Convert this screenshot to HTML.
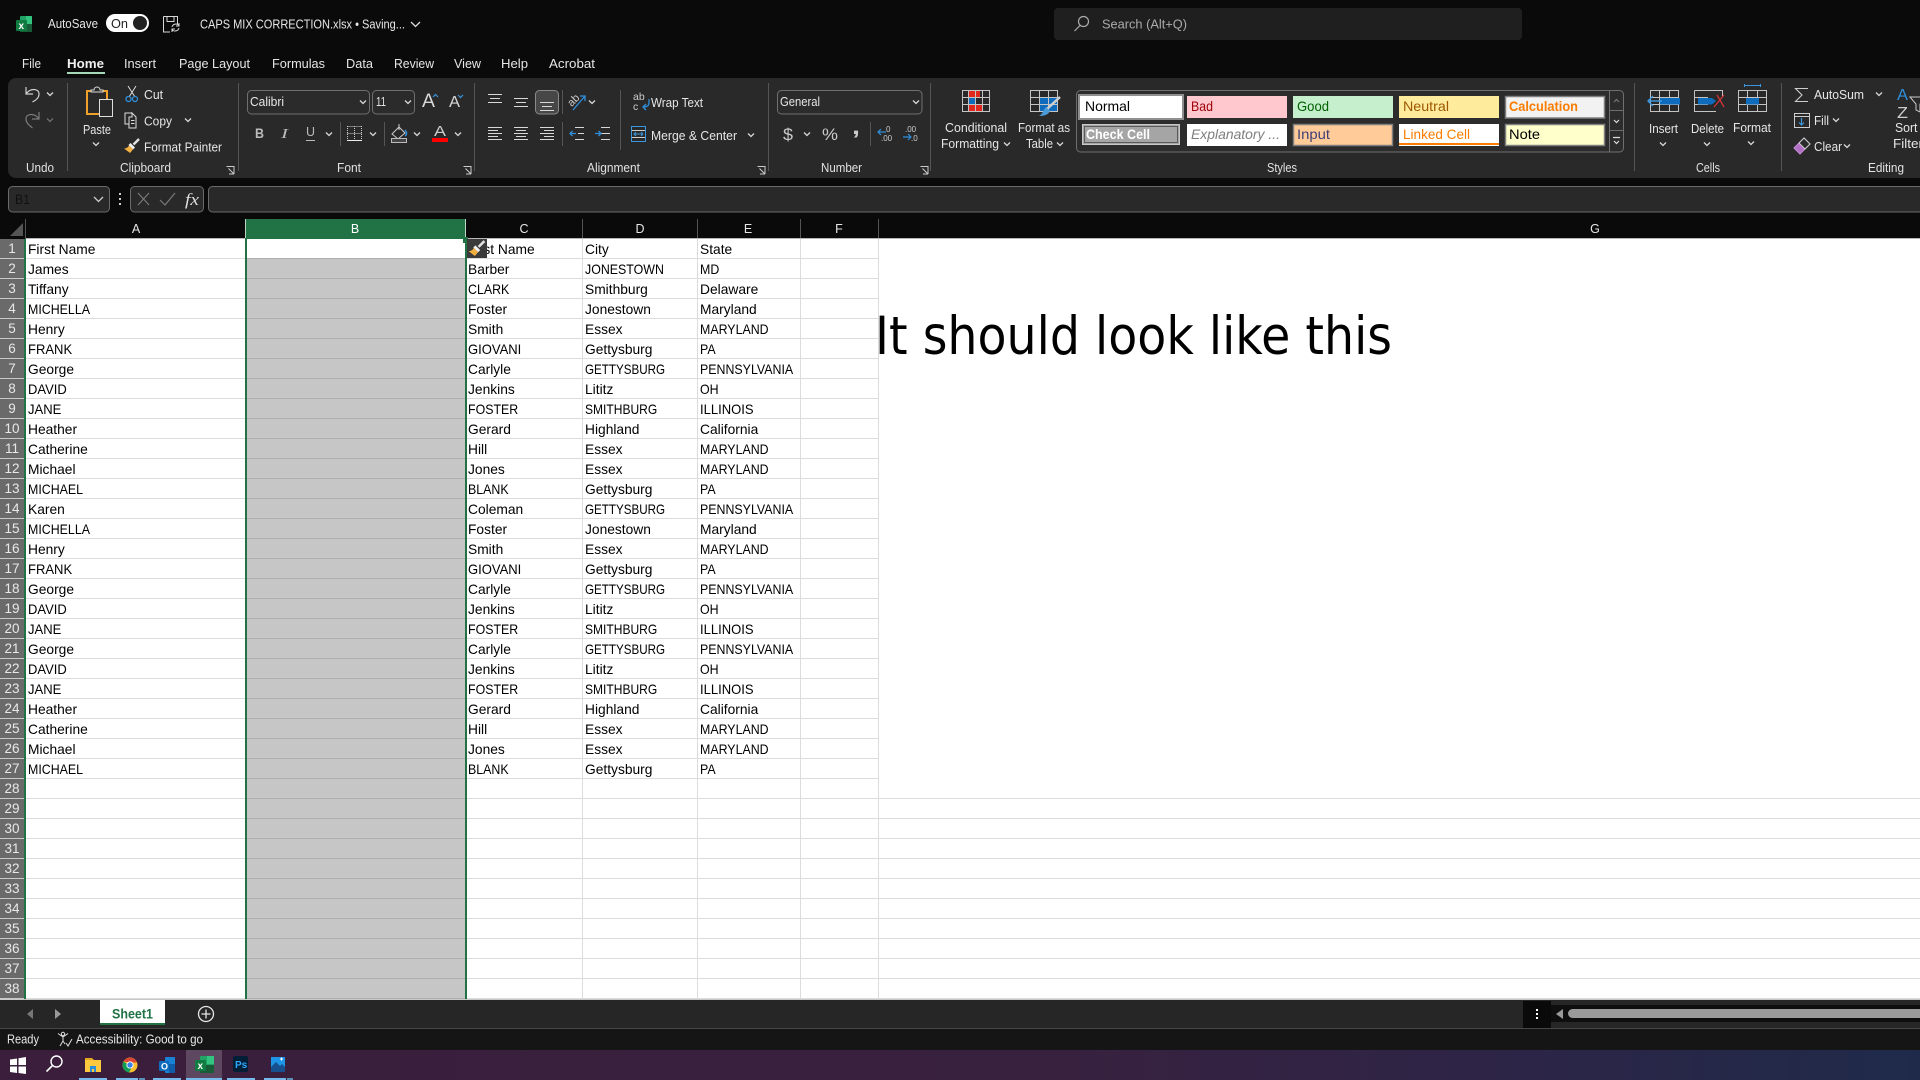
<!DOCTYPE html>
<html lang="en"><head><meta charset="utf-8"><title>CAPS MIX CORRECTION.xlsx - Excel</title>
<style>
html,body{margin:0;padding:0;background:#0a0a0a;width:1920px;height:1080px;overflow:hidden}
#w{position:relative;width:1920px;height:1080px;overflow:hidden;font-family:"Liberation Sans",sans-serif}
.a{position:absolute}
.col{position:absolute;top:239px;font-size:14px;color:#000;white-space:nowrap}
.col div{height:20px;line-height:20px;transform:scaleX(.985);transform-origin:0 50%}
.col div.u{transform:scaleX(.885)}
.col div.v{transform:scaleX(.93)}
.col div.w{transform:scaleX(.83)}
.col div.x{transform:scaleX(.86)}
.rh{position:absolute;left:0;top:239px;width:24px;text-align:center;font-size:13.5px;color:#e8e8e8}
.rh div{height:20px;line-height:20px}
svg{position:absolute;left:0;top:0}
text{font-family:"Liberation Sans",sans-serif;font-size:13px;fill:#e6e6e6}
.g{font-size:12.5px;fill:#e2e2e2}
.st{font-size:14px}
.ln{fill:none;stroke:#d8d8d8;stroke-width:1}
.dim{fill:none;stroke:#cfcfcf;stroke-width:1.2}
.box{fill:#2b2b2b;stroke:#6f6f6f;stroke-width:1}
.sep{stroke:#555;stroke-width:1}
</style></head><body>
<div id="w">
<!-- sheet background -->
<div class="a" style="left:26px;top:239px;width:1894px;height:761px;background:#fff"></div>
<div class="a" style="left:26px;top:239px;width:219px;height:760px;background:repeating-linear-gradient(to bottom,transparent 0 19px,#dcdcdc 19px 20px)"></div>
<div class="a" style="left:247px;top:258px;width:218px;height:741px;background:repeating-linear-gradient(to bottom,#afafaf 0 1px,#c6c6c6 1px 20px)"></div>
<div class="a" style="left:467px;top:239px;width:411px;height:760px;background:repeating-linear-gradient(to bottom,transparent 0 19px,#dcdcdc 19px 20px)"></div>
<div class="a" style="left:878px;top:779px;width:1042px;height:220px;background:repeating-linear-gradient(to bottom,transparent 0 19px,#dcdcdc 19px 20px)"></div>
<div class="a" style="left:582px;top:239px;width:1px;height:760px;background:#dcdcdc"></div>
<div class="a" style="left:697px;top:239px;width:1px;height:760px;background:#dcdcdc"></div>
<div class="a" style="left:800px;top:239px;width:1px;height:760px;background:#dcdcdc"></div>
<div class="a" style="left:878px;top:239px;width:1px;height:760px;background:#dcdcdc"></div>
<div class="a" style="left:24px;top:239px;width:2px;height:760px;background:#217346"></div>
<div class="a" style="left:245px;top:239px;width:2px;height:761px;background:#217346"></div>
<div class="a" style="left:465px;top:239px;width:2px;height:761px;background:#217346"></div>
<div class="a" style="left:0;top:239px;width:24px;height:760px;background:repeating-linear-gradient(to bottom,#6a6a6a 0 19px,#c9c9c9 19px 20px)"></div>
<div class="rh"><div>1</div><div>2</div><div>3</div><div>4</div><div>5</div><div>6</div><div>7</div><div>8</div><div>9</div><div>10</div><div>11</div><div>12</div><div>13</div><div>14</div><div>15</div><div>16</div><div>17</div><div>18</div><div>19</div><div>20</div><div>21</div><div>22</div><div>23</div><div>24</div><div>25</div><div>26</div><div>27</div><div>28</div><div>29</div><div>30</div><div>31</div><div>32</div><div>33</div><div>34</div><div>35</div><div>36</div><div>37</div><div>38</div></div>

<div class="col" style="left:28px"><div>First Name</div><div>James</div><div>Tiffany</div><div class="u">MICHELLA</div><div>Henry</div><div class="v">FRANK</div><div>George</div><div class="v">DAVID</div><div class="v">JANE</div><div>Heather</div><div>Catherine</div><div>Michael</div><div class="u">MICHAEL</div><div>Karen</div><div class="u">MICHELLA</div><div>Henry</div><div class="v">FRANK</div><div>George</div><div class="v">DAVID</div><div class="v">JANE</div><div>George</div><div class="v">DAVID</div><div class="v">JANE</div><div>Heather</div><div>Catherine</div><div>Michael</div><div class="u">MICHAEL</div></div>
<div class="col" style="left:468px"><div>Last Name</div><div>Barber</div><div class="u">CLARK</div><div>Foster</div><div>Smith</div><div class="v">GIOVANI</div><div>Carlyle</div><div>Jenkins</div><div class="u">FOSTER</div><div>Gerard</div><div>Hill</div><div>Jones</div><div class="u">BLANK</div><div>Coleman</div><div>Foster</div><div>Smith</div><div class="v">GIOVANI</div><div>Carlyle</div><div>Jenkins</div><div class="u">FOSTER</div><div>Carlyle</div><div>Jenkins</div><div class="u">FOSTER</div><div>Gerard</div><div>Hill</div><div>Jones</div><div class="u">BLANK</div></div>
<div class="col" style="left:585px"><div>City</div><div class="u">JONESTOWN</div><div>Smithburg</div><div>Jonestown</div><div>Essex</div><div>Gettysburg</div><div class="w">GETTYSBURG</div><div>Lititz</div><div class="x">SMITHBURG</div><div>Highland</div><div>Essex</div><div>Essex</div><div>Gettysburg</div><div class="w">GETTYSBURG</div><div>Jonestown</div><div>Essex</div><div>Gettysburg</div><div class="w">GETTYSBURG</div><div>Lititz</div><div class="x">SMITHBURG</div><div class="w">GETTYSBURG</div><div>Lititz</div><div class="x">SMITHBURG</div><div>Highland</div><div>Essex</div><div>Essex</div><div>Gettysburg</div></div>
<div class="col" style="left:700px"><div>State</div><div class="u">MD</div><div>Delaware</div><div>Maryland</div><div class="u">MARYLAND</div><div class="u">PA</div><div class="u">PENNSYLVANIA</div><div class="u">OH</div><div class="v">ILLINOIS</div><div>California</div><div class="u">MARYLAND</div><div class="u">MARYLAND</div><div class="u">PA</div><div class="u">PENNSYLVANIA</div><div>Maryland</div><div class="u">MARYLAND</div><div class="u">PA</div><div class="u">PENNSYLVANIA</div><div class="u">OH</div><div class="v">ILLINOIS</div><div class="u">PENNSYLVANIA</div><div class="u">OH</div><div class="v">ILLINOIS</div><div>California</div><div class="u">MARYLAND</div><div class="u">MARYLAND</div><div class="u">PA</div></div>

<svg width="1920" height="1080" viewBox="0 0 1920 1080">
<defs>
<path id="ch" d="M-3 -1.5L0 1.5L3 -1.5" fill="none" stroke="#d8d8d8" stroke-width="1.3"/>
<symbol id="br" viewBox="0 0 16 16" overflow="visible"><path d="M15 1L9.500 6.500" stroke="#e2e2e2" stroke-width="2.400" fill="none"/><path d="M6.500 5L11 9.500L9 11.500L4.500 7Z" fill="#f0f0f0"/><path d="M5 7.500L9 11.500L6 15L0 10.500C2 10.500 4 9.500 5 7.500Z" fill="#f2b040"/></symbol>
<linearGradient id="tb" x1="0" x2="1"><stop offset="0" stop-color="#3a1e3b"/><stop offset=".55" stop-color="#38213f"/><stop offset=".75" stop-color="#2f2446"/><stop offset="1" stop-color="#1f2a4a"/></linearGradient>
</defs>

<!-- Title bar -->
<rect x="20" y="16" width="12" height="16" rx="1" fill="#21a366"/><rect x="26" y="16" width="6" height="8" fill="#33c481"/><rect x="20" y="24" width="12" height="8" fill="#185c37"/><rect x="16" y="20" width="11" height="11" rx="1" fill="#107c41"/>
<text x="18.500" y="29" style="font-size:10px;font-weight:bold;fill:#fff">x</text>
<text x="48" y="28" textLength="50" lengthAdjust="spacingAndGlyphs">AutoSave</text>
<rect x="106" y="14" width="43" height="18" rx="9" fill="#fff"/>
<text x="111" y="28" textLength="17" lengthAdjust="spacingAndGlyphs" style="fill:#222">On</text>
<circle cx="140" cy="23" r="7" fill="#222"/>
<path d="M163.500 16.500H177.500V24M163.500 16.500V32H170M167 16.500V21.500H174V16.500" fill="none" stroke="#d8d8d8"/><path d="M172 27a4 4 0 0 1 7-1.500M179 28a4 4 0 0 1-7 1.500M179 23v3h-3M172 32v-3h3" fill="none" stroke="#d8d8d8"/>
<text x="200" y="28.500" textLength="205" lengthAdjust="spacingAndGlyphs">CAPS MIX CORRECTION.xlsx • Saving...</text>
<path d="M411 22L415.500 26.500L420 22" fill="none" stroke="#ddd" stroke-width="1.300"/>
<rect x="1054" y="8" width="468" height="32" rx="4" fill="#1f1f1f"/>
<circle cx="1083.500" cy="21.500" r="5" fill="none" stroke="#aaa" stroke-width="1.200"/><path d="M1080 25.500L1074.500 31" stroke="#aaa" stroke-width="1.200"/>
<text x="1102" y="28.500" textLength="85" lengthAdjust="spacingAndGlyphs" style="fill:#ababab">Search (Alt+Q)</text>

<!-- Tabs -->
<text x="22" y="68" textLength="19" lengthAdjust="spacingAndGlyphs">File</text>
<text x="67" y="68" textLength="37" lengthAdjust="spacingAndGlyphs" style="font-weight:bold;fill:#f0f0f0">Home</text>
<rect x="67" y="72" width="38" height="2" fill="#a6d8ba"/>
<text x="124" y="68" textLength="32" lengthAdjust="spacingAndGlyphs">Insert</text>
<text x="179" y="68" textLength="71" lengthAdjust="spacingAndGlyphs">Page Layout</text>
<text x="272" y="68" textLength="53" lengthAdjust="spacingAndGlyphs">Formulas</text>
<text x="346" y="68" textLength="27" lengthAdjust="spacingAndGlyphs">Data</text>
<text x="394" y="68" textLength="40" lengthAdjust="spacingAndGlyphs">Review</text>
<text x="454" y="68" textLength="27" lengthAdjust="spacingAndGlyphs">View</text>
<text x="501" y="68" textLength="27" lengthAdjust="spacingAndGlyphs">Help</text>
<text x="549" y="68" textLength="46" lengthAdjust="spacingAndGlyphs">Acrobat</text>

<!-- Ribbon -->
<rect x="8" y="78" width="1930" height="100" rx="8" fill="#292929"/>
<!-- undo -->
<path d="M26 87V94H33M26 94C30 88 39 88 39 94C39 98 36 100 32.500 102" class="dim"/><use href="#ch" x="50" y="94"/>
<path d="M39 112V119H32M39 119C35 113 26 113 26 119C26 123 29 125 32.500 128" fill="none" stroke="#7a7a7a" stroke-width="1.200"/><use href="#ch" x="50" y="120" opacity=".4"/>
<text x="26" y="172" textLength="28" lengthAdjust="spacingAndGlyphs" class="g">Undo</text>
<path d="M67.500 83V171" class="sep"/>
<!-- clipboard -->
<path d="M91 91H87V114H99M103 91H107V99" fill="none" stroke="#eea02c" stroke-width="2"/>
<path d="M91 92V90H94C94 86 100 86 100 90H103V92Z" fill="#292929" stroke="#ddd"/>
<rect x="99.500" y="99.500" width="13" height="17" fill="#292929" stroke="#ddd"/>
<text x="83" y="134" textLength="28" lengthAdjust="spacingAndGlyphs">Paste</text><use href="#ch" x="96" y="144"/>
<path d="M128 86L135 97M136 86L129 97" stroke="#ddd" fill="none"/><circle cx="128.500" cy="99" r="2.500" fill="none" stroke="#2f8fdc" stroke-width="1.300"/><circle cx="135" cy="99" r="2.500" fill="none" stroke="#2f8fdc" stroke-width="1.300"/>
<text x="144" y="99" textLength="19" lengthAdjust="spacingAndGlyphs">Cut</text>
<path d="M132 113H125V124H129M132 113L136 117V128H129V117H132Z" fill="none" stroke="#ddd"/><path d="M131 120.500H134.500M131 123.500H134.500" stroke="#ddd"/>
<text x="144" y="125.500" textLength="28" lengthAdjust="spacingAndGlyphs">Copy</text><use href="#ch" x="188" y="120"/>
<use href="#br" x="124" y="138" width="16" height="16"/>
<text x="144" y="151.500" textLength="78" lengthAdjust="spacingAndGlyphs">Format Painter</text>
<text x="120" y="172" textLength="51" lengthAdjust="spacingAndGlyphs" class="g">Clipboard</text>
<path d="M226.500 166.500H234V174M228.500 168.500L233.500 173.500M229 174H234" fill="none" stroke="#ccc"/>
<path d="M238.500 83V171" class="sep"/>
<!-- font -->
<rect x="247.500" y="90.500" width="122" height="23.500" rx="4" class="box"/>
<text x="250" y="106" textLength="34" lengthAdjust="spacingAndGlyphs">Calibri</text><use href="#ch" x="363" y="102"/>
<rect x="372.500" y="90.500" width="42" height="23.500" rx="4" class="box"/>
<text x="376" y="106" textLength="10" lengthAdjust="spacingAndGlyphs">11</text><use href="#ch" x="408" y="102"/>
<text x="422" y="107" textLength="13" lengthAdjust="spacingAndGlyphs" style="font-size:19px;fill:#d8d8d8">A</text><path d="M433 97L435.500 94.500L438 97" fill="none" stroke="#3a96dd" stroke-width="1.200"/>
<text x="449" y="107" textLength="11" lengthAdjust="spacingAndGlyphs" style="font-size:16px;fill:#d8d8d8">A</text><path d="M458 95L460.500 97.500L463 95" fill="none" stroke="#3a96dd" stroke-width="1.200"/>
<text x="255" y="138" textLength="9" lengthAdjust="spacingAndGlyphs" style="font-weight:bold;font-size:14px;fill:#bbb">B</text>
<text x="281" y="138" textLength="7" lengthAdjust="spacingAndGlyphs" style="font-style:italic;font-size:14px;fill:#bbb;font-family:'Liberation Serif',serif">I</text>
<text x="306" y="136" textLength="9" lengthAdjust="spacingAndGlyphs" style="font-size:13px;fill:#bbb">U</text><path d="M306 140.500H315" stroke="#bbb"/>
<use href="#ch" x="329" y="134"/>
<path d="M340.500 122V146" class="sep"/>
<path d="M347.500 126.500H362M347.500 133.500H362M354.500 126V141M347.500 126V141M361.500 126V141" fill="none" stroke="#ccc" stroke-dasharray="1 1"/><path d="M347 140.500H362" stroke="#eee"/>
<use href="#ch" x="373" y="134"/>
<path d="M384.500 122V146" class="sep"/>
<path d="M392 134L399 127L405 133L398 139Z" fill="none" stroke="#ccc"/><path d="M399 124V130" stroke="#ccc"/><path d="M405 130C407 132 407 135 405 136" stroke="#2f8fdc" fill="none" stroke-width="1.500"/>
<rect x="391.500" y="138.500" width="15" height="4" fill="#444" stroke="#bbb"/>
<use href="#ch" x="417" y="134"/>
<text x="434" y="136" textLength="12" lengthAdjust="spacingAndGlyphs" style="font-size:15px;fill:#ccc">A</text>
<rect x="432" y="138" width="16" height="4" fill="#f00"/>
<use href="#ch" x="458" y="134"/>
<text x="337" y="172" textLength="24" lengthAdjust="spacingAndGlyphs" class="g">Font</text>
<path d="M463.500 166.500H471V174M465.500 168.500L470.500 173.500M466 174H471" fill="none" stroke="#ccc"/>
<path d="M474.500 83V171" class="sep"/>
<!-- alignment -->
<path d="M488 94.500H502M490 98.500H500M488 102.500H502M514 98.500H528M516 102.500H526M514 106.500H528" class="ln"/>
<rect x="535.500" y="90.500" width="23" height="23.500" rx="4" fill="#474747" stroke="#8a8a8a"/>
<path d="M540 102.500H554M542 106.500H552M540 110.500H554" class="ln"/>
<path d="M562.500 90V114" class="sep"/>
<text x="567" y="104" style="font-size:11px;fill:#ccc" transform="rotate(-45 573 100)">ab</text><path d="M573 110L585 96M580 96H585V101" fill="none" stroke="#2f8fdc" stroke-width="1.300"/>
<use href="#ch" x="592" y="102"/>
<path d="M488 127.500H502M488 130.500H498M488 133.500H502M488 136.500H498M488 139.500H502M514 127.500H528M516 130.500H526M514 133.500H528M516 136.500H526M514 139.500H528M540 127.500H554M544 130.500H554M540 133.500H554M544 136.500H554M540 139.500H554" class="ln"/>
<path d="M562.500 122V146" class="sep"/>
<path d="M575 127.500H584M575 139.500H584M578 133.500H584" class="ln"/><path d="M570 133.500H576M572.500 131L570 133.500L572.500 136" fill="none" stroke="#2f8fdc" stroke-width="1.300"/>
<path d="M601 127.500H610M601 139.500H610M601 133.500H610" class="ln"/><path d="M595 133.500H601M598.500 131L601 133.500L598.500 136" fill="none" stroke="#2f8fdc" stroke-width="1.300"/>
<path d="M620.500 90V150" class="sep"/>
<text x="633" y="100" style="font-size:10.500px;fill:#ccc">ab</text><text x="633" y="110" style="font-size:10.500px;fill:#ccc">c</text><path d="M649 99V103C649 106 646 107 643 107M646 104L643 107L646 110" fill="none" stroke="#2f8fdc" stroke-width="1.300"/>
<text x="651" y="107" textLength="52" lengthAdjust="spacingAndGlyphs">Wrap Text</text>
<rect x="631.500" y="126.500" width="14" height="15" fill="none" stroke="#3a96dd"/><path d="M632 130.500H645M632 137.500H645" stroke="#ccc"/><path d="M634 134H643M636 132L634 134L636 136M641 132L643 134L641 136" fill="none" stroke="#3a96dd"/>
<text x="651" y="140" textLength="86" lengthAdjust="spacingAndGlyphs">Merge &amp; Center</text><use href="#ch" x="751" y="135"/>
<text x="587" y="172" textLength="53" lengthAdjust="spacingAndGlyphs" class="g">Alignment</text>
<path d="M757.500 166.500H765V174M759.500 168.500L764.500 173.500M760 174H765" fill="none" stroke="#ccc"/>
<path d="M768.500 83V171" class="sep"/>
<!-- number -->
<rect x="777.500" y="90.500" width="144.500" height="23.500" rx="4" class="box"/>
<text x="780" y="106" textLength="40" lengthAdjust="spacingAndGlyphs">General</text><use href="#ch" x="916" y="102"/>
<text x="783" y="140" textLength="10" lengthAdjust="spacingAndGlyphs" style="font-size:17px;fill:#ccc">$</text><use href="#ch" x="807" y="134"/>
<text x="822" y="140" textLength="16" lengthAdjust="spacingAndGlyphs" style="font-size:17px;fill:#ccc">%</text>
<text x="852" y="134" textLength="8" lengthAdjust="spacingAndGlyphs" style="font-size:22px;font-weight:bold;fill:#ccc">,</text>
<path d="M870.500 122V146" class="sep"/>
<path d="M878 132H886M881 129L878 132L881 135" fill="none" stroke="#2f8fdc" stroke-width="1.200"/><text x="886" y="132" style="font-size:8px;fill:#ccc">0</text><text x="881" y="141" style="font-size:8px;fill:#ccc">.00</text>
<text x="905" y="132" style="font-size:8px;fill:#ccc">.00</text><path d="M903 137H911M908 134L911 137L908 140" fill="none" stroke="#2f8fdc" stroke-width="1.200"/><text x="911" y="141" style="font-size:8px;fill:#ccc">.0</text>
<text x="821" y="172" textLength="41" lengthAdjust="spacingAndGlyphs" class="g">Number</text>
<path d="M920.500 166.500H928V174M922.500 168.500L927.500 173.500M923 174H928" fill="none" stroke="#ccc"/>
<path d="M930.500 83V171" class="sep"/>
<!-- conditional formatting -->
<rect x="968" y="90" width="12" height="7" fill="#e1261c"/><rect x="968" y="97" width="8" height="7" fill="#0f6cbd"/><rect x="968" y="104" width="14" height="7" fill="#e1261c"/>
<path d="M962.500 90.500H989.500V111.500H962.500ZM962.500 97.500H989.500M962.500 104.500H989.500M968.500 90V112M975.500 90V112M982.500 90V112" fill="none" stroke="#c4c4c4"/>
<text x="945" y="132" textLength="62" lengthAdjust="spacingAndGlyphs">Conditional</text>
<text x="941" y="148" textLength="58" lengthAdjust="spacingAndGlyphs">Formatting</text><use href="#ch" x="1007" y="144"/>
<rect x="1040" y="97" width="18" height="15" fill="#0f6cbd"/>
<path d="M1030.500 90.500H1057.500V111.500H1030.500ZM1030.500 97.500H1057.500M1030.500 104.500H1057.500M1039.500 90V112M1048.500 90V112" fill="none" stroke="#c4c4c4"/>
<path d="M1060 97L1047 109" stroke="#cfcfcf" stroke-width="2.500"/><path d="M1046 107L1050 111C1048 115 1044 116 1039 116C1043 114 1043 110 1046 107Z" fill="#4a9bd8"/>
<text x="1018" y="132" textLength="52" lengthAdjust="spacingAndGlyphs">Format as</text>
<text x="1026" y="148" textLength="27" lengthAdjust="spacingAndGlyphs">Table</text><use href="#ch" x="1060" y="144"/>
<!-- styles gallery -->
<rect x="1076.500" y="90.500" width="547" height="61.500" rx="4" fill="#2c2c2c" stroke="#6f6f6f"/>
<rect x="1079" y="95" width="104" height="24" fill="#fff" stroke="#8f8f8f" stroke-width="2"/>
<text x="1085" y="111" textLength="45" lengthAdjust="spacingAndGlyphs" class="st" style="fill:#000">Normal</text>
<rect x="1187" y="96" width="100" height="22" fill="#ffc7ce"/><text x="1191" y="111" textLength="22" lengthAdjust="spacingAndGlyphs" class="st" style="fill:#9c0006">Bad</text>
<rect x="1293" y="96" width="100" height="22" fill="#c6efce"/><text x="1297" y="111" textLength="32" lengthAdjust="spacingAndGlyphs" class="st" style="fill:#006100">Good</text>
<rect x="1399" y="96" width="100" height="22" fill="#ffeb9c"/><text x="1403" y="111" textLength="46" lengthAdjust="spacingAndGlyphs" class="st" style="fill:#9c5700">Neutral</text>
<rect x="1505.500" y="96.500" width="99" height="21.500" fill="#f2f2f2" stroke="#7f7f7f" stroke-width="1.500"/><text x="1509" y="111" textLength="69" lengthAdjust="spacingAndGlyphs" class="st" style="fill:#fa7d00;font-weight:bold">Calculation</text>
<rect x="1082.500" y="124.500" width="97" height="20" fill="#a5a5a5" stroke="#c8c8c8"/><rect x="1084.500" y="126.500" width="93" height="16" fill="none" stroke="#5a5a5a"/>
<text x="1086" y="139" textLength="64" lengthAdjust="spacingAndGlyphs" class="st" style="fill:#fff;font-weight:bold">Check Cell</text>
<rect x="1187" y="124" width="100" height="22" fill="#fff"/><text x="1191" y="139" textLength="89" lengthAdjust="spacingAndGlyphs" class="st" style="fill:#7f7f7f;font-style:italic">Explanatory ...</text>
<rect x="1293.500" y="124.500" width="99" height="21" fill="#ffcc99" stroke="#7f7f7f" stroke-width="1.500"/><text x="1297" y="139" textLength="33" lengthAdjust="spacingAndGlyphs" class="st" style="fill:#3f3f76">Input</text>
<rect x="1399" y="124" width="100" height="22" fill="#fff"/><rect x="1399" y="143" width="100" height="2" fill="#fa7d00"/><text x="1403" y="139" textLength="67" lengthAdjust="spacingAndGlyphs" class="st" style="fill:#fa7d00">Linked Cell</text>
<rect x="1505.500" y="124.500" width="99" height="21" fill="#ffc" stroke="#7f7f7f" stroke-width="1.500"/><text x="1509" y="139" textLength="31" lengthAdjust="spacingAndGlyphs" class="st" style="fill:#000">Note</text>
<path d="M1609.500 90.500V152M1609.500 110.500H1623.500M1609.500 130.500H1623.500" stroke="#6f6f6f" fill="none"/>
<path d="M1614 102L1616.500 99.500L1619 102" fill="none" stroke="#777" stroke-width="1.200"/><path d="M1614 120L1616.500 122.500L1619 120" fill="none" stroke="#ddd" stroke-width="1.200"/><path d="M1613 137.500H1620M1614 141L1616.500 143.500L1619 141" fill="none" stroke="#ddd" stroke-width="1.200"/>
<text x="1267" y="172" textLength="30" lengthAdjust="spacingAndGlyphs" class="g">Styles</text>
<path d="M1634.500 83V171" class="sep"/>
<!-- cells -->
<path d="M1650.500 90.500H1678.500V111.500H1650.500ZM1650.500 97.500H1678.500M1650.500 104.500H1678.500M1659.500 90V112M1669.500 90V112" fill="none" stroke="#c4c4c4"/><rect x="1660" y="98" width="20" height="6.500" fill="#0f6cbd"/><path d="M1648 101H1662M1653 96L1648 101L1653 106" fill="none" stroke="#3a96dd" stroke-width="1.400"/>
<text x="1649" y="133" textLength="29" lengthAdjust="spacingAndGlyphs">Insert</text><use href="#ch" x="1663" y="144"/>
<path d="M1694.500 90.500H1722.500V96.500M1694.500 90.500V111.500H1716M1694.500 97.500H1708M1694.500 104.500H1708" fill="none" stroke="#c4c4c4"/><rect x="1698" y="98" width="14" height="6.500" fill="#0f6cbd"/><path d="M1712 98L1716 101L1712 104.500Z" fill="#0f6cbd"/><path d="M1717 95L1724 107M1724 95L1714 107" stroke="#d13438" stroke-width="1.300" fill="none"/>
<text x="1691" y="133" textLength="33" lengthAdjust="spacingAndGlyphs">Delete</text><use href="#ch" x="1707" y="144"/>
<path d="M1738.500 90.500H1766.500V111.500H1738.500ZM1738.500 97.500H1766.500M1738.500 104.500H1766.500M1747.500 90V112M1757.500 90V112" fill="none" stroke="#c4c4c4"/><rect x="1746" y="98" width="13" height="6.500" fill="#0f6cbd"/><path d="M1744.500 84V87M1760.500 84V87M1744.500 85.500H1760.500" stroke="#3a96dd" fill="none"/>
<text x="1733" y="132" textLength="38" lengthAdjust="spacingAndGlyphs">Format</text><use href="#ch" x="1751" y="143"/>
<text x="1696" y="172" textLength="24" lengthAdjust="spacingAndGlyphs" class="g">Cells</text>
<path d="M1781.500 83V171" class="sep"/>
<!-- editing -->
<path d="M1808 88.500H1795.500L1802 95L1795.500 101.500H1808" fill="none" stroke="#ccc" stroke-width="1.100"/>
<text x="1814" y="99" textLength="50" lengthAdjust="spacingAndGlyphs">AutoSum</text><use href="#ch" x="1879" y="94"/>
<rect x="1794.500" y="113.500" width="15" height="14" fill="none" stroke="#ccc"/><path d="M1795 116.500H1809" stroke="#ccc"/><path d="M1801.500 118V125M1799 122.500L1801.500 125L1804 122.500" fill="none" stroke="#3a96dd" stroke-width="1.200"/>
<text x="1814" y="125" textLength="15" lengthAdjust="spacingAndGlyphs">Fill</text><use href="#ch" x="1836" y="120"/>
<path d="M1794 148L1804 138L1810 144L1800 154Z" fill="#b36fc7" stroke="#c78dd8"/><path d="M1799 143L1804 138L1810 144L1805 149Z" fill="#2b2b2b" stroke="#ccc"/>
<text x="1814" y="151" textLength="28" lengthAdjust="spacingAndGlyphs">Clear</text><use href="#ch" x="1847" y="146"/>
<text x="1897" y="100" textLength="11" lengthAdjust="spacingAndGlyphs" style="font-size:16px;fill:#2f8fdc">A</text>
<text x="1897" y="118" textLength="11" lengthAdjust="spacingAndGlyphs" style="font-size:16px;fill:#ccc">Z</text>
<path d="M1910 97H1926L1920 104V112L1916 110V104Z" fill="none" stroke="#ccc"/>
<text x="1895" y="132" textLength="34" lengthAdjust="spacingAndGlyphs">Sort &amp;</text>
<text x="1893" y="148" textLength="30" lengthAdjust="spacingAndGlyphs">Filter</text>
<text x="1868" y="172" textLength="36" lengthAdjust="spacingAndGlyphs" class="g">Editing</text>

<!-- Formula bar -->
<rect x="8.500" y="186.500" width="101" height="25.500" rx="4" fill="#292929" stroke="#6a6a6a"/>
<text x="15" y="204" textLength="15" lengthAdjust="spacingAndGlyphs" style="fill:#111;font-size:13.500px">B1</text>
<path d="M94 197L98.500 201.500L103 197" fill="none" stroke="#ccc" stroke-width="1.300"/>
<rect x="119" y="193" width="2" height="2" fill="#ccc"/><rect x="119" y="198" width="2" height="2" fill="#ccc"/><rect x="119" y="203" width="2" height="2" fill="#ccc"/>
<rect x="130.500" y="186.500" width="73" height="25.500" rx="4" fill="#292929" stroke="#6a6a6a"/>
<path d="M138 193L149 205M149 193L138 205" stroke="#7c7c7c" stroke-width="1.100"/><path d="M160 200L165 205L175 193" fill="none" stroke="#7c7c7c" stroke-width="1.100"/>
<text x="185" y="205" textLength="14" lengthAdjust="spacingAndGlyphs" style="font-family:'Liberation Serif',serif;font-style:italic;font-size:17px;fill:#ddd">fx</text>
<rect x="208.500" y="186.500" width="1720" height="25.500" rx="4" fill="#292929" stroke="#6a6a6a"/>

<!-- Column headers -->
<path d="M23 223V236H10Z" fill="#555"/>
<path d="M25.500 219V239" stroke="#555"/>
<rect x="245" y="219" width="221" height="20" fill="#217346"/>
<path d="M245.500 219V239M465.500 219V239" stroke="#bcd3c6"/>
<path d="M582.500 219V239M697.500 219V239M800.500 219V239M878.500 219V239" stroke="#555"/>
<g style="text-anchor:middle">
<text x="136" y="233" style="font-size:12.500px">A</text><text x="355" y="233" style="font-size:12.500px;fill:#fff">B</text><text x="524" y="233" style="font-size:12.500px">C</text><text x="640" y="233" style="font-size:12.500px">D</text><text x="748" y="233" style="font-size:12.500px">E</text><text x="839" y="233" style="font-size:12.500px">F</text><text x="1595" y="233" style="font-size:12.500px">G</text>
</g>
<rect x="26" y="238" width="1894" height="1" fill="#b8b8b8"/>
<rect x="245" y="238" width="222" height="1" fill="#217346"/>
<rect x="463" y="237" width="5" height="6" fill="#217346"/>
<rect x="467" y="239" width="20" height="19" fill="#3b3b3b"/>
<use href="#br" x="468" y="240" width="18" height="17"/>

<text x="875" y="354" textLength="517" lengthAdjust="spacingAndGlyphs" style="font-family:'DejaVu Sans',sans-serif;font-size:53px;fill:#000">It should look like this</text>

<!-- Sheet tabs -->
<rect x="0" y="999" width="1920" height="1" fill="#c8c8c8"/>
<rect x="0" y="1000" width="1920" height="28" fill="#262626"/>
<rect x="0" y="1028" width="1920" height="1" fill="#474747"/>
<path d="M33 1009V1019L27 1014Z" fill="#777"/><path d="M55 1009V1019L61 1014Z" fill="#999"/>
<rect x="100" y="1000" width="65" height="24" fill="#fff"/><rect x="100" y="1023" width="65" height="2" fill="#217346"/>
<text x="112" y="1018.500" textLength="41" lengthAdjust="spacingAndGlyphs" style="font-weight:bold;font-size:14px;fill:#217346">Sheet1</text>
<circle cx="206" cy="1014" r="7.500" fill="none" stroke="#e6e6e6" stroke-width="1.300"/><path d="M201.500 1014H210.500M206 1009.500V1018.500" stroke="#e6e6e6" stroke-width="1.300"/>
<rect x="1523" y="1001" width="28" height="27" fill="#0a0a0a"/>
<rect x="1536" y="1009" width="2" height="2" fill="#fff"/><rect x="1536" y="1013" width="2" height="2" fill="#fff"/><rect x="1536" y="1017" width="2" height="2" fill="#fff"/>
<rect x="1551" y="1005" width="369" height="17" fill="#0e0e0e"/>
<path d="M1563 1009V1019L1556 1014Z" fill="#9a9a9a"/>
<rect x="1568" y="1009" width="380" height="9" rx="4.500" fill="#9a9a9a"/>

<!-- Status bar -->
<rect x="0" y="1029" width="1920" height="21" fill="#151515"/>
<text x="7" y="1043.500" textLength="32" lengthAdjust="spacingAndGlyphs" style="font-size:12.500px">Ready</text>
<circle cx="63" cy="1034" r="1.700" fill="none" stroke="#ddd"/><path d="M58 1033.500L63 1037L68 1033.500M63 1037V1041L60 1046M63 1041L65 1044M66 1043L68 1046L72 1039" fill="none" stroke="#ddd"/>
<text x="76" y="1043.500" textLength="127" lengthAdjust="spacingAndGlyphs" style="font-size:12.500px">Accessibility: Good to go</text>

<!-- Taskbar -->
<rect x="0" y="1050" width="1920" height="30" fill="url(#tb)"/>
<path d="M10 1059.500L17 1058.500V1065H10ZM18.500 1058.300L26 1057V1065H18.500ZM10 1066.500H17V1073L10 1072ZM18.500 1066.500H26V1074L18.500 1073Z" fill="#fff"/>
<circle cx="56.500" cy="1061.500" r="5.500" fill="none" stroke="#fff" stroke-width="1.400"/><path d="M52.500 1065.500L46.500 1071.500" stroke="#fff" stroke-width="1.600"/>
<path d="M85 1058H92L94 1060H85Z" fill="#e3a91d"/><rect x="85" y="1060" width="16" height="12" fill="#fcc83f"/><path d="M90 1072V1066H96V1072H94V1069H92V1072Z" fill="#2a8fd8"/>
<circle cx="130" cy="1065" r="7.500" fill="#fbc02d"/><path d="M123.500 1061.500A7.500 7.500 0 0 1 137 1062.500H130Z" fill="#db4437"/><path d="M123.500 1061.500A7.500 7.500 0 0 0 129 1072.500L132 1067Z" fill="#0f9d58"/><circle cx="130" cy="1065" r="3.600" fill="#fff"/><circle cx="130" cy="1065" r="2.700" fill="#3b82e8"/>
<rect x="165" y="1057" width="10" height="16" rx="1" fill="#1a82d4"/><rect x="169" y="1064" width="6" height="9" fill="#0f5ca8"/><rect x="159" y="1061" width="10" height="10" rx="1" fill="#0f6cbd"/><text x="161" y="1069.500" style="font-size:9px;font-weight:bold;fill:#fff">O</text>
<rect x="186" y="1050" width="36" height="30" fill="#5e4760"/>
<rect x="200" y="1056" width="14" height="17" rx="1" fill="#21a366"/><rect x="207" y="1056" width="7" height="8" fill="#33c481"/><rect x="200" y="1065" width="14" height="8" fill="#185c37"/><rect x="195" y="1060" width="11" height="11" rx="1" fill="#107c41"/>
<text x="197.500" y="1069" style="font-size:10px;font-weight:bold;fill:#fff">x</text>
<rect x="233" y="1056" width="15" height="16" rx="2" fill="#001e36"/><text x="235" y="1068" style="font-size:10px;font-weight:bold;fill:#31a8ff">Ps</text>
<rect x="271" y="1057" width="14" height="15" fill="#1e95e6"/><path d="M271 1072V1067L276 1062L280 1066L282 1064L285 1067V1072Z" fill="#17508f"/><path d="M280 1059H283M281.500 1057.500V1060.500" stroke="#fff"/>
<g fill="#76b9ed"><rect x="79" y="1078" width="28" height="2"/><rect x="116" y="1078" width="22" height="2"/><rect x="139" y="1078" width="6" height="2" fill="#5a8fb8"/><rect x="153" y="1078" width="28" height="2"/><rect x="186" y="1078" width="36" height="2"/><rect x="227" y="1078" width="28" height="2"/><rect x="264" y="1078" width="22" height="2"/><rect x="287" y="1078" width="6" height="2" fill="#5a8fb8"/></g>
</svg>
</div>
</body></html>
